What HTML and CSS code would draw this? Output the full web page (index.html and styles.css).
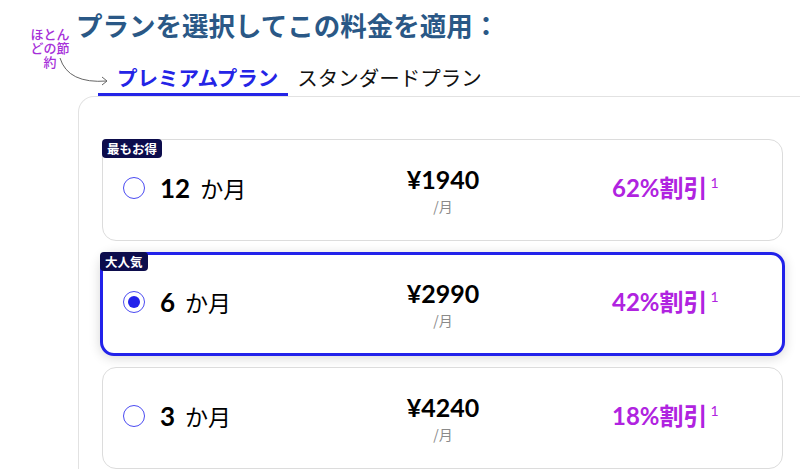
FILE: index.html
```html
<!DOCTYPE html>
<html lang="ja">
  <head>
    <meta charset="UTF-8" />
    <meta name="viewport" content="width=device-width, initial-scale=1.0" />
    <title>プラン選択</title>
    <link rel="stylesheet" href="styles.css">
  </head>
  <body>
    <div class="page">
      <div class="note">ほとん<br>どの節<br>約</div>
      <svg class="note-arrow" width="60" height="40" viewBox="55 50 60 40">
        <path d="M60 58 Q 68 84 107 81" fill="none" stroke="#666" stroke-width="1" />
        <path d="M102 77 L107 81 L102 85" fill="none" stroke="#666" stroke-width="1" />
      </svg>

      <h1 class="title">プランを選択してこの料金を適用：</h1>

      <div class="tabs">
        <div class="tab tab-active">プレミアムプラン</div>
        <div class="tab">スタンダードプラン</div>
      </div>

      <div class="panel">
        <div class="plan">
          <span class="badge">最もお得</span>
          <div class="term">
            <span class="radio"></span>
            <span class="term-num">12</span>
            <span class="term-unit">か月</span>
          </div>
          <div class="price">
            <span class="price-val">¥1940</span>
            <span class="price-per">/月</span>
          </div>
          <div class="discount">62%割引<sup>1</sup></div>
        </div>

        <div class="plan plan-selected">
          <span class="badge">大人気</span>
          <div class="term">
            <span class="radio radio-on"></span>
            <span class="term-num">6</span>
            <span class="term-unit">か月</span>
          </div>
          <div class="price">
            <span class="price-val">¥2990</span>
            <span class="price-per">/月</span>
          </div>
          <div class="discount">42%割引<sup>1</sup></div>
        </div>

        <div class="plan">
          <div class="term">
            <span class="radio"></span>
            <span class="term-num">3</span>
            <span class="term-unit">か月</span>
          </div>
          <div class="price">
            <span class="price-val">¥4240</span>
            <span class="price-per">/月</span>
          </div>
          <div class="discount">18%割引<sup>1</sup></div>
        </div>
      </div>
    </div>
  </body>
</html>
```

FILE: styles.css
```css
* {
    margin: 0;
    padding: 0;
    box-sizing: border-box;
}

html, body {
    height: 100%;
    overflow: hidden;
    background-color: #fff;
    font-family: Lato, "Noto Sans CJK JP", sans-serif;
    color: #000;
}

.page {
    position: relative;
    padding-left: 78px;
}

/* small hint on the left */
.note {
    position: absolute;
    left: 28px;
    top: 27px;
    width: 44px;
    text-align: center;
    font-family: "Noto Sans CJK JP", sans-serif;
    font-size: 13px;
    line-height: 14px;
    font-weight: 500;
    color: #a62fd9;
}

.note-arrow {
    position: absolute;
    left: 55px;
    top: 50px;
}

.title {
    margin-left: -2px;
    padding-top: 8px;
    font-family: "Noto Sans CJK JP", sans-serif;
    font-size: 26.5px;
    line-height: 34px;
    font-weight: 700;
    color: #2a5886;
}

.tabs {
    display: flex;
    margin-top: 23px;
    margin-left: 20px;
}

.tab {
    font-family: "Noto Sans CJK JP", sans-serif;
    font-size: 20.5px;
    line-height: 24px;
    padding: 0 9px 4px 9px;
    border-bottom: 3px solid transparent;
    color: #111;
}

.tab-active {
    padding-left: 19px;
    padding-right: 10px;
    font-weight: 700;
    color: #2424e6;
    border-bottom-color: #2424e6;
}

.panel {
    width: 729px;
    padding: 42px 23px 0 23px;
    border: 1px solid #e2e2e2;
    border-bottom: none;
    border-radius: 16px 0 0 0;
    display: flex;
    flex-direction: column;
    gap: 12px;
}

.plan {
    position: relative;
    display: grid;
    grid-template-columns: 250px 140px 1fr;
    align-items: center;
    height: 102px;
    padding: 0 20px;
    border: 1px solid #dcdcdc;
    border-radius: 14px;
    background-color: #fff;
}

.plan-selected {
    height: 104px;
    margin: -1px -2px;
    border: 3px solid #2222ea;
    box-shadow: 0 2px 12px rgba(0, 0, 0, 0.16);
}

.badge {
    position: absolute;
    top: -1px;
    left: -1px;
    height: 19px;
    padding: 0 5px;
    border-radius: 4px;
    background-color: #0c0c4c;
    color: #fff;
    font-family: "Noto Sans CJK JP", sans-serif;
    font-size: 12.5px;
    line-height: 19px;
    font-weight: 700;
}

.plan-selected .badge {
    top: -3px;
    left: -3px;
}

.term {
    display: flex;
    align-items: center;
    margin-bottom: 4px;
}

.radio {
    width: 22px;
    height: 22px;
    border: 1.5px solid #4b4bf2;
    border-radius: 50%;
    margin-right: 15px;
    display: flex;
    justify-content: center;
    align-items: center;
}

.radio-on::after {
    content: "";
    width: 12px;
    height: 12px;
    border-radius: 50%;
    background-color: #2222ea;
}

.term-num {
    font-size: 26px;
    font-weight: 700;
    line-height: 30px;
    margin-right: 10px;
}

.term-unit {
    font-family: "Noto Sans CJK JP", sans-serif;
    font-size: 23px;
    line-height: 30px;
}

.price {
    display: flex;
    flex-direction: column;
    align-items: center;
}

.price-val {
    font-size: 25px;
    font-weight: 700;
    line-height: 28px;
}

.price-per {
    margin-top: 4px;
    font-family: "Noto Sans CJK JP", sans-serif;
    font-size: 14px;
    line-height: 18px;
    color: #8a8a8a;
}

.discount {
    padding-left: 99px;
    margin-bottom: 10px;
    font-size: 24px;
    font-weight: 700;
    line-height: 28px;
    color: #b023e0;
    white-space: nowrap;
}

.discount sup {
    font-size: 14px;
    font-weight: 400;
    vertical-align: 9px;
    margin-left: 3px;
}
```
